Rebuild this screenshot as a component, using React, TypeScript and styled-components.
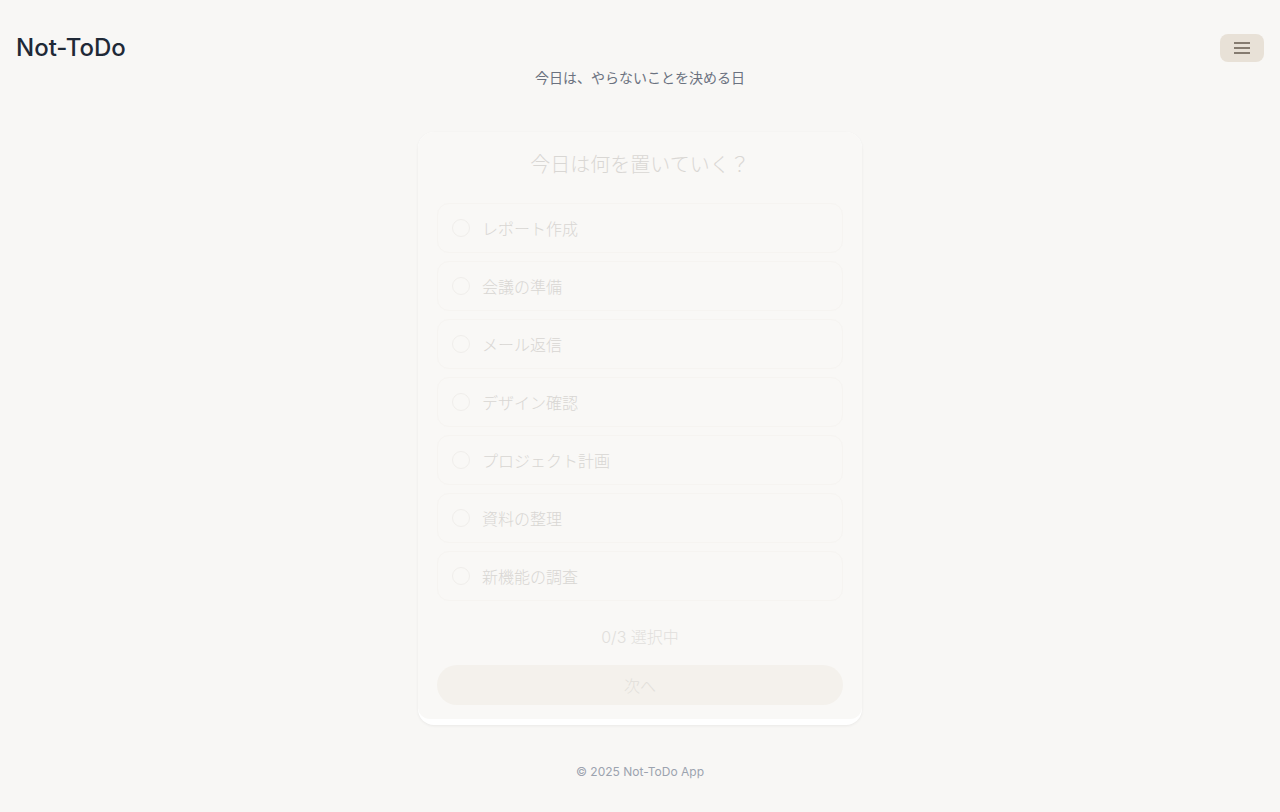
import styled, { createGlobalStyle } from "styled-components"

const GlobalStyle = createGlobalStyle`
    * { box-sizing: border-box; }
    html, body {
        margin: 0;
        padding: 0;
        background: #f8f7f5;
        font-family: Inter, "Noto Sans CJK JP", "Noto Sans", sans-serif;
    }
`

const Page = styled.div`
    min-height: 812px;
    display: flex;
    flex-direction: column;
    align-items: center;
`

const Header = styled.header`
    width: 100%;
    display: flex;
    align-items: center;
    justify-content: space-between;
    padding: 34px 16px 0;
`

const Logo = styled.h1`
    margin: 0;
    font-size: 24px;
    line-height: 28px;
    font-weight: 500;
    color: #1f2937;
`

const MenuButton = styled.button`
    width: 44px;
    height: 28px;
    border: none;
    border-radius: 8px;
    background: #e8e1d7;
    display: flex;
    flex-direction: column;
    align-items: center;
    justify-content: center;
    gap: 3px;
    padding: 0;
    cursor: pointer;
`

const Bar = styled.span`
    display: block;
    width: 16px;
    height: 2px;
    background: #857b70;
`

const Subtitle = styled.p`
    margin: 6px 0 0;
    font-size: 14px;
    line-height: 20px;
    color: #6b7280;
`

const Card = styled.section`
    margin-top: 44px;
    width: 444px;
    background: #ffffff;
    border-radius: 16px;
    box-shadow: 0 1px 3px rgba(0, 0, 0, 0.06);
    padding-bottom: 6px;
`

const Inner = styled.div`
    background: #f9f8f6;
    border-radius: 16px 16px 12px 12px;
    padding: 19px 19px 14px;
    display: flex;
    flex-direction: column;
`

const Question = styled.h2`
    margin: 0;
    text-align: center;
    font-size: 20px;
    line-height: 28px;
    font-weight: 300;
    color: #d9d7d4;
`

const List = styled.ul`
    list-style: none;
    margin: 24px 0 0;
    padding: 0;
    display: flex;
    flex-direction: column;
    gap: 8px;
`

const Item = styled.li`
    height: 50px;
    display: flex;
    align-items: center;
    gap: 12px;
    padding: 0 14px;
    border: 1px solid #f6f4f1;
    border-radius: 12px;
    font-size: 16px;
    font-weight: 300;
    color: #d8d6d3;
`

const Radio = styled.span`
    width: 18px;
    height: 18px;
    border-radius: 50%;
    border: 1.5px solid #f0eeeb;
    flex-shrink: 0;
`

const Count = styled.p`
    margin: 24px 0 0;
    text-align: center;
    font-size: 16px;
    line-height: 24px;
    font-weight: 300;
    color: #e1dfdc;
`

const NextButton = styled.button`
    margin-top: 16px;
    height: 40px;
    border: none;
    border-radius: 20px;
    background: #f4f1ec;
    color: #e2dfda;
    font-family: inherit;
    font-size: 16px;
    font-weight: 300;
`

const Footer = styled.footer`
    margin-top: 39px;
    font-size: 12px;
    line-height: 16px;
    color: #9ca3af;
`

const tasks = [
    "レポート作成",
    "会議の準備",
    "メール返信",
    "デザイン確認",
    "プロジェクト計画",
    "資料の整理",
    "新機能の調査",
]

export default function App() {
    return (
        <Page>
            <GlobalStyle />
            <Header>
                <Logo>Not-ToDo</Logo>
                <MenuButton aria-label="menu">
                    <Bar />
                    <Bar />
                    <Bar />
                </MenuButton>
            </Header>
            <Subtitle>今日は、やらないことを決める日</Subtitle>
            <Card>
                <Inner>
                    <Question>今日は何を置いていく？</Question>
                    <List>
                        {tasks.map(t => (
                            <Item key={t}>
                                <Radio />
                                {t}
                            </Item>
                        ))}
                    </List>
                    <Count>0/3 選択中</Count>
                    <NextButton disabled>次へ</NextButton>
                </Inner>
            </Card>
            <Footer>© 2025 Not-ToDo App</Footer>
        </Page>
    )
}
